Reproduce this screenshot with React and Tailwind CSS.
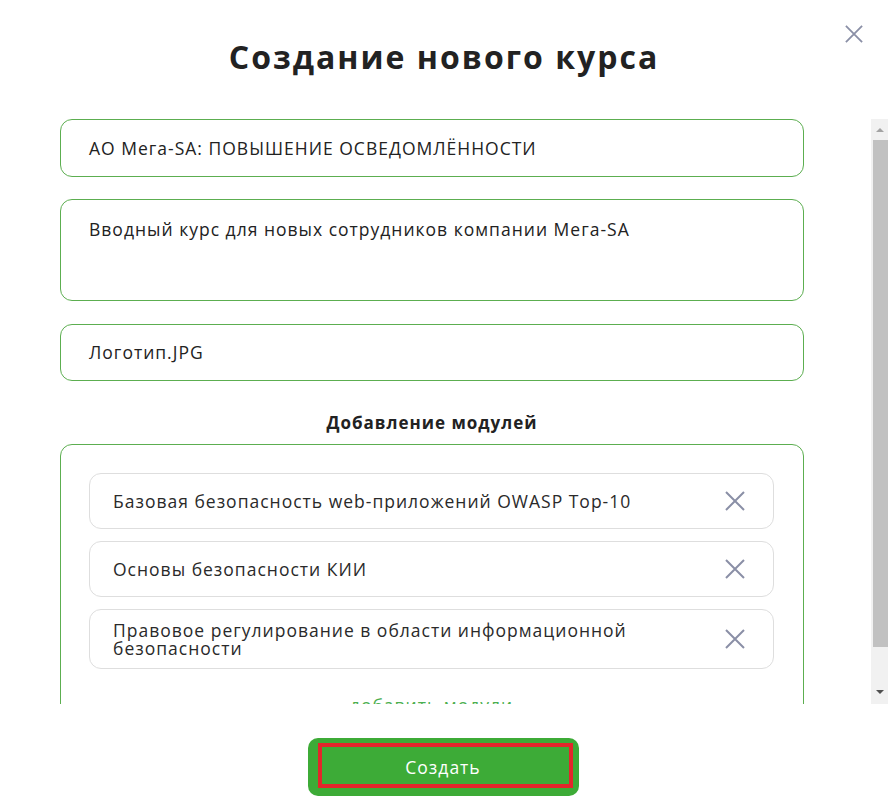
import React from "react";

const XIcon = ({ className }) => (
  <svg viewBox="0 0 20 20" className={className} fill="none" stroke="currentColor" strokeWidth="2" strokeLinecap="butt">
    <path d="M1 1 L19 19 M19 1 L1 19" />
  </svg>
);

const modules = [
  "Базовая безопасность web-приложений OWASP Top-10",
  "Основы безопасности КИИ",
  "Правовое регулирование в области информационной безопасности",
];

export default function App() {
  return (
    <div
      className="relative w-[888px] h-[811px] bg-white overflow-hidden text-[#222] tracking-[1px]"
      style={{ fontFamily: '"Open Sans", "Noto Sans", sans-serif' }}
    >
      <button className="absolute left-[845px] top-[25px] w-[18px] h-[18px] text-[#8a8fa6]">
        <XIcon className="w-[18px] h-[18px]" />
      </button>

      <div className="h-[119px] pt-[35px] text-center">
        <h1 className="text-[32px] leading-[44px] font-bold tracking-[2px] text-[#222]">Создание нового курса</h1>
      </div>

      <div className="flex h-[585px]">
        <div className="flex-1 overflow-hidden pl-[60px] pr-[67px]">
          <div className="h-[58px] rounded-[12px] border border-[#5cae50] flex items-center px-[28px] text-[17.5px]">
            АО Мега-SA: ПОВЫШЕНИЕ ОСВЕДОМЛЁННОСТИ
          </div>
          <div className="mt-[22px] h-[102px] rounded-[12px] border border-[#5cae50] px-[28px] pt-[16px] text-[17.5px]">
            Вводный курс для новых сотрудников компании Мега-SA
          </div>
          <div className="mt-[23px] h-[57px] rounded-[12px] border border-[#5cae50] flex items-center px-[28px] text-[17.5px]">
            Логотип.JPG
          </div>
          <div className="mt-[30px] text-center text-[17px] font-bold leading-[24px]">Добавление модулей</div>
          <div className="mt-[9px] rounded-[12px] border border-[#5cae50] pl-[28px] pr-[29px] pt-[28px] pb-[20px]">
            <div className="flex flex-col gap-[12px]">
              {modules.map((m, i) => (
                <div
                  key={i}
                  className={`flex items-center justify-between rounded-[12px] border border-[#dedede] pl-[23px] pr-[28px] ${i === 2 ? "h-[60px]" : "h-[56px]"}`}
                >
                  <span className="text-[17.5px] leading-[18px] text-[#2a2a2a] max-w-[560px]">{m}</span>
                  <XIcon className="w-[20px] h-[20px] text-[#8a8fa6] shrink-0" />
                </div>
              ))}
            </div>
            <div className="mt-[23px] text-center text-[17.5px] text-[#4caf50]">добавить модули</div>
          </div>
        </div>
        <div className="w-[17px] bg-[#f1f1f1] flex flex-col items-end">
          <div className="h-[21px] w-full flex items-center justify-center">
            <div className="w-0 h-0 border-l-[4px] border-r-[4px] border-b-[4px] border-l-transparent border-r-transparent border-b-[#a3a3a3]" />
          </div>
          <div className="h-[507px] w-[15px] bg-[#c1c1c1]" />
          <div className="flex-1 w-full flex items-end justify-center pb-[10px]">
            <div className="w-0 h-0 border-l-[4px] border-r-[4px] border-t-[4px] border-l-transparent border-r-transparent border-t-[#505050]" />
          </div>
        </div>
      </div>

      <div className="flex justify-center pt-[34px] pr-[2px]">
        <button className="relative w-[271px] h-[58px] rounded-[10px] bg-[#3dab37] text-white text-[17.5px] flex items-center justify-center">
          Создать
          <span className="absolute left-[10px] top-[5px] w-[255px] h-[45px] border-[4px] border-[#e3262b]" />
        </button>
      </div>
    </div>
  );
}
